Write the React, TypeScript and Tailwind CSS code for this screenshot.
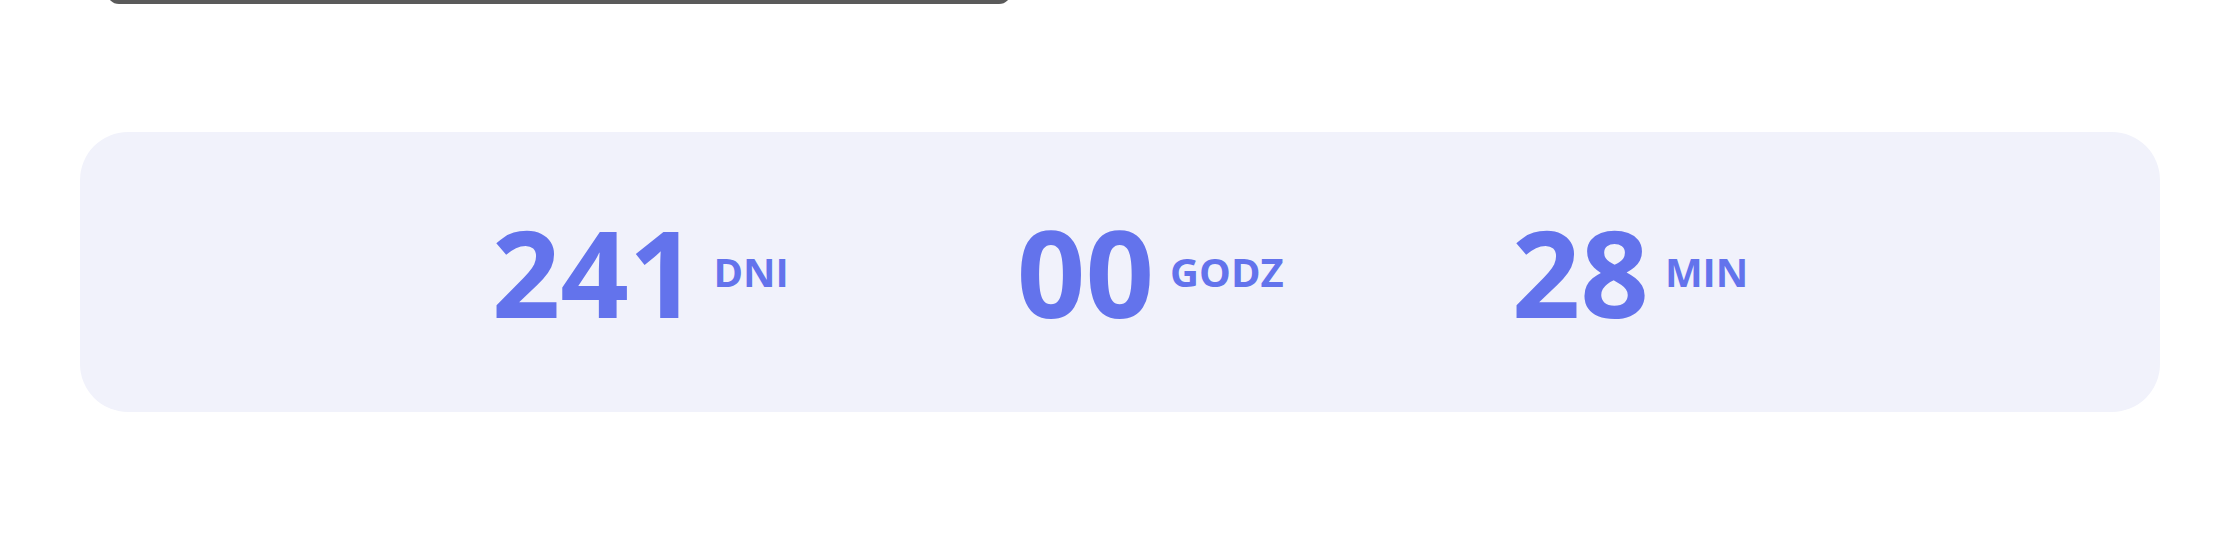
import React from "react";

const units = [
  { value: "241", label: "DNI" },
  { value: "00", label: "GODZ" },
  { value: "28", label: "MIN" },
];

export default function App() {
  return (
    <div
      className="h-[544px] w-full overflow-hidden bg-white"
      style={{ fontFamily: '"Open Sans", "Noto Sans", sans-serif' }}
    >
      {/* bottom edge of the card above, scrolled mostly out of view */}
      <div className="ml-[107px] -mt-[20px] h-[24px] w-[904px] rounded-[20px] bg-[#5a5a5a]" />

      <section className="mx-[80px] mt-[128px] flex h-[280px] items-center justify-center gap-[228px] rounded-[48px] bg-[#f1f2fb]">
        {units.map((u) => (
          <div key={u.label} className="flex items-center gap-4 text-[#6373ec]">
            <span className="text-[120px] font-bold leading-none">{u.value}</span>
            <span className="text-[40px] font-bold uppercase leading-none">{u.label}</span>
          </div>
        ))}
      </section>
    </div>
  );
}
